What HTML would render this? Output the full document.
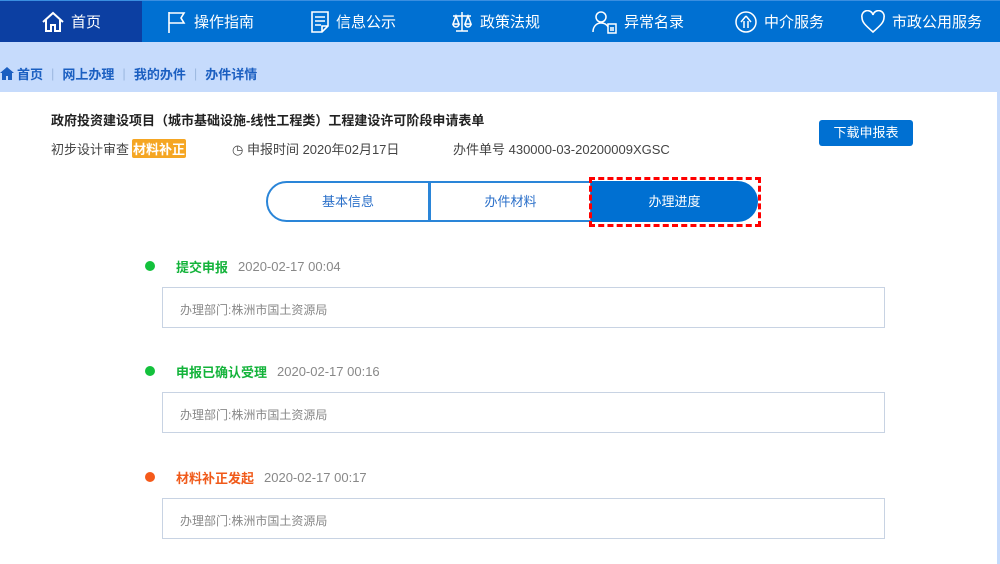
<!DOCTYPE html>
<html><head><meta charset="utf-8"><style>
*{margin:0;padding:0;box-sizing:border-box}
body{width:1000px;height:564px;overflow:hidden;background:#c6dbfc;font-family:"Liberation Sans","Noto Sans CJK SC",sans-serif;position:relative}
.nav{position:absolute;left:0;top:0;width:1000px;height:42px;background:#0070d2;border-top:1px solid #3a8ee0}
.nav .it{position:absolute;top:0;height:41px;display:flex;align-items:center;color:#fff;font-size:15px;gap:6px}
.nav .home{left:0;width:142px;background:#0c3fa2;justify-content:center}
svg{display:block}
.bc{position:absolute;left:0;top:64px;font-size:13px;color:#1b5fc1;display:flex;align-items:center;font-weight:bold}
.bc .s{color:#9db8e0;margin:0 8px;font-weight:normal}
.panel{position:absolute;left:0;top:92px;width:997px;height:472px;background:#fff}
.abs{position:absolute}
.box{position:absolute;left:162px;width:723px;height:41px;border:1px solid #c8d3e3;font-size:12px;color:#888;padding:13px 0 0 17px}
.dot{position:absolute;left:145px;width:10px;height:10px;border-radius:50%}
.tt{position:absolute;left:176px;font-size:13px;display:flex;gap:10px;align-items:center}
.tt span:first-child{font-weight:bold}
.tt span:last-child{color:#888}
</style></head><body>
<div class="nav">
 <div class="it home"><svg width="24" height="22" viewBox="0 0 24 22"><path d="M2 11L12 2l10 9M5 9v11h5v-6h4v6h5V9" fill="none" stroke="#fff" stroke-width="2"/></svg>首页</div>
 <div class="it" style="left:166px"><svg width="22" height="24" viewBox="0 0 22 24"><path d="M3 2v21M3 3h15l-3 5 3 5H3" fill="none" stroke="#fff" stroke-width="1.6"/></svg>操作指南</div>
 <div class="it" style="left:310px"><svg width="20" height="24" viewBox="0 0 20 24"><path d="M2 2h16v14l-6 6H2zM5 7h10M5 11h10M5 15h6M12 22v-6h6" fill="none" stroke="#fff" stroke-width="1.6"/></svg>信息公示</div>
 <div class="it" style="left:450px"><svg width="24" height="24" viewBox="0 0 24 24"><path d="M12 2v19M6 21h12M3 6h18M6 6l-3 8h6zM18 6l-3 8h6zM3 14a3 3 0 006 0M15 14a3 3 0 006 0" fill="none" stroke="#fff" stroke-width="1.5"/></svg>政策法规</div>
 <div class="it" style="left:592px"><svg width="26" height="24" viewBox="0 0 26 24"><circle cx="9" cy="7" r="5" fill="none" stroke="#fff" stroke-width="1.5"/><path d="M1 22c0-6 4-9 8-9s6 2 7 4M16 14h8v9h-8zM18 18h4M18 20h4" fill="none" stroke="#fff" stroke-width="1.5"/></svg>异常名录</div>
 <div class="it" style="left:734px"><svg width="24" height="24" viewBox="0 0 24 24"><circle cx="12" cy="12" r="10" fill="none" stroke="#fff" stroke-width="1.5"/><path d="M12 6l-5 6M12 6l5 6M10 11v7M14 11v7" fill="none" stroke="#fff" stroke-width="1.5"/></svg>中介服务</div>
 <div class="it" style="left:860px"><svg width="26" height="24" viewBox="0 0 26 24"><path d="M13 22C5 15 2 12 2 7.5A5.5 5.5 0 0113 5a5.5 5.5 0 0111 2.5C24 12 21 15 13 22z" fill="none" stroke="#fff" stroke-width="1.6"/></svg>市政公用服务</div>
</div>
<div class="bc"><svg width="14" height="13" viewBox="0 0 14 13"><path d="M7 0L0 6h2v7h4V9h2v4h4V6h2z" fill="#1b5fc1"/></svg><span style="margin-left:3px">首页</span><span class="s">|</span>网上办理<span class="s">|</span>我的办件<span class="s">|</span>办件详情</div>
<div class="panel"></div>
<div class="abs" style="left:51px;top:110px;font-size:13px;color:#222;font-weight:bold">政府投资建设项目（城市基础设施-线性工程类）工程建设许可阶段申请表单</div>
<div class="abs" style="left:51px;top:139px;font-size:13px;color:#444;display:flex;align-items:center">初步设计审查<span style="background:#f5a623;color:#fff;border-radius:2px;padding:0 1px;margin-left:3px;font-weight:bold">材料补正</span></div>
<div class="abs" style="left:232px;top:139px;font-size:13px;color:#444">◷ 申报时间 2020年02月17日</div>
<div class="abs" style="left:453px;top:139px;font-size:13px;color:#444">办件单号 430000-03-20200009XGSC</div>
<div class="abs" style="left:819px;top:120px;width:94px;height:26px;background:#0070d2;border-radius:3px;color:#fff;font-size:13px;text-align:center;line-height:26px">下载申报表</div>
<div class="abs" style="left:266px;top:181px;width:164px;height:41px;border:2px solid #2a85d8;border-radius:21px 0 0 21px;color:#2a6fc9;font-size:13px;text-align:center;line-height:37px">基本信息</div>
<div class="abs" style="left:429px;top:181px;width:163px;height:41px;border:2px solid #2a85d8;color:#2a6fc9;font-size:13px;text-align:center;line-height:37px">办件材料</div>
<div class="abs" style="left:591px;top:181px;width:167px;height:41px;background:#0070d2;border-radius:0 21px 21px 0;color:#fff;font-size:13px;text-align:center;line-height:41px">办理进度</div>
<div class="abs" style="left:589px;top:177px;width:172px;height:50px;border:3px dashed #f00"></div>
<div class="dot" style="top:261px;background:#13c13c"></div>
<div class="tt" style="top:257px"><span style="color:#13b33a">提交申报</span><span>2020-02-17 00:04</span></div>
<div class="box" style="top:287px">办理部门:株洲市国土资源局</div>
<div class="dot" style="top:366px;background:#13c13c"></div>
<div class="tt" style="top:362px"><span style="color:#13b33a">申报已确认受理</span><span>2020-02-17 00:16</span></div>
<div class="box" style="top:392px">办理部门:株洲市国土资源局</div>
<div class="dot" style="top:472px;background:#f55a1a"></div>
<div class="tt" style="top:468px"><span style="color:#f05a1a">材料补正发起</span><span>2020-02-17 00:17</span></div>
<div class="box" style="top:498px">办理部门:株洲市国土资源局</div>
</body></html>
